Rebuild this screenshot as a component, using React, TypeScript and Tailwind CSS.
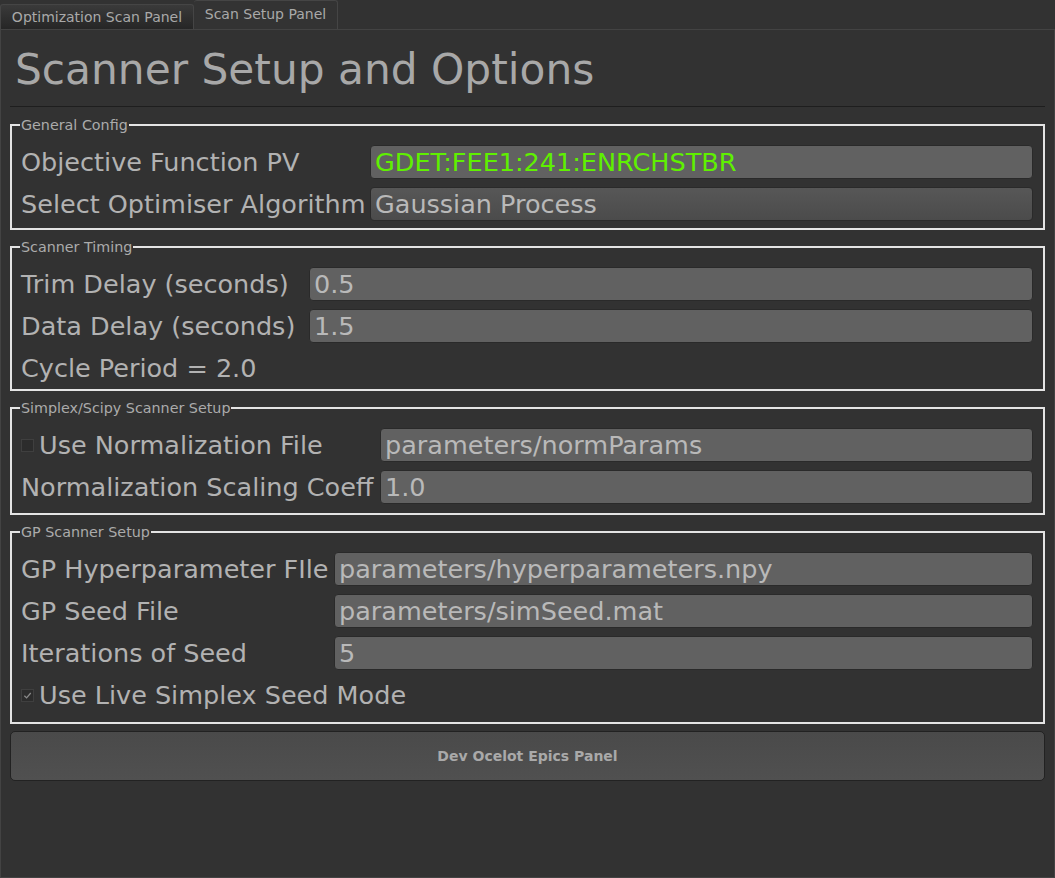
import React from "react";

const font = { fontFamily: '"DejaVu Sans", "Liberation Sans", sans-serif' };

type Row =
  | { kind: "input"; label: string; value: string; green?: boolean; combo?: boolean; check?: boolean; checked?: boolean }
  | { kind: "text"; label: string }
  | { kind: "check"; label: string; checked: boolean };

const CheckBox = ({ checked }: { checked: boolean }) => (
  <span className="mr-[5px] flex h-[13px] w-[13px] shrink-0 items-center justify-center border border-[#3f3f3f] bg-[#2c2c2c]">
    {checked && (
      <svg viewBox="0 0 10 10" className="h-[9px] w-[9px]">
        <path d="M1.5 5.2 L4 7.6 L8.6 2.2" fill="none" stroke="#8a8a8a" strokeWidth="1.4" />
      </svg>
    )}
  </span>
);

const Field = ({ value, green, combo }: { value: string; green?: boolean; combo?: boolean }) => (
  <div
    className={`flex h-[34px] items-center overflow-hidden rounded-[4px] border border-[#2a2a2a] pl-[4px] pt-[1px] text-[25.5px] leading-none ${
      combo ? "bg-gradient-to-b from-[#575757] to-[#4b4b4b]" : "bg-[#616161]"
    } ${green ? "text-[#5ff000]" : "text-[#b9b9b9]"}`}
  >
    {value}
  </div>
);

const Group = ({
  title,
  labelWidth,
  rows,
  className,
}: {
  title: string;
  labelWidth: string;
  rows: Row[];
  className: string;
}) => (
  <div className={`border-2 border-[#e4e4e4] pl-[9px] pr-[10px] ${className}`}>
    <div className="-mt-[9px] -ml-[1px] w-fit bg-[#323232] px-[1px] text-[14.3px] leading-[16px] text-[#ababab]">
      {title}
    </div>
    <div className={`mt-[12px] grid gap-y-[8px] ${labelWidth}`}>
      {rows.map((r, i) => {
        if (r.kind === "input") {
          return (
            <React.Fragment key={i}>
              <div className="flex h-[34px] items-center whitespace-nowrap text-[25.5px] text-[#b2b2b2]">
                {r.check && <CheckBox checked={!!r.checked} />}
                {r.label}
              </div>
              <Field value={r.value} green={r.green} combo={r.combo} />
            </React.Fragment>
          );
        }
        if (r.kind === "text") {
          return (
            <div key={i} className="col-span-2 flex h-[34px] items-center text-[25.5px] text-[#b2b2b2]">
              {r.label}
            </div>
          );
        }
        return (
          <div key={i} className="col-span-2 flex h-[34px] items-center text-[25.5px] text-[#b2b2b2]">
            <CheckBox checked={r.checked} />
            {r.label}
          </div>
        );
      })}
    </div>
  </div>
);

export default function App() {
  return (
    <div className="flex h-[878px] w-[1055px] flex-col bg-[#323232]" style={font}>
      {/* Tabs */}
      <div className="flex h-[29px] items-end">
        <div className="flex h-[25px] w-[194px] items-center justify-center rounded-t-[3px] border border-b-0 border-[#454545] bg-gradient-to-b from-[#3a3a3a] to-[#262626] text-[14px] text-[#a9a9a9]">
          Optimization Scan Panel
        </div>
        <div className="flex h-[29px] w-[144px] items-center justify-center rounded-t-[3px] border border-b-0 border-l-0 border-[#454545] bg-[#333333] pb-[1px] text-[14px] text-[#a9a9a9]">
          Scan Setup Panel
        </div>
      </div>

      {/* Panel */}
      <div className="flex flex-1 flex-col border border-[#434343] px-[9px]">
        <div className="ml-[5px] mt-[15px] text-[42.3px] leading-[50px] text-[#a8a8a8]">Scanner Setup and Options</div>
        <div className="mt-[11px] h-px bg-[#1e1e1e]" />

        <Group
          title="General Config"
          labelWidth="grid-cols-[349px_1fr]"
          className="mt-[17px] pb-[7px]"
          rows={[
            { kind: "input", label: "Objective Function PV", value: "GDET:FEE1:241:ENRCHSTBR", green: true },
            { kind: "input", label: "Select Optimiser Algorithm", value: "Gaussian Process", combo: true },
          ]}
        />

        <Group
          title="Scanner Timing"
          labelWidth="grid-cols-[288px_1fr]"
          className="mt-[16px] pb-[4px]"
          rows={[
            { kind: "input", label: "Trim Delay (seconds)", value: "0.5" },
            { kind: "input", label: "Data Delay (seconds)", value: "1.5" },
            { kind: "text", label: "Cycle Period = 2.0" },
          ]}
        />

        <Group
          title="Simplex/Scipy Scanner Setup"
          labelWidth="grid-cols-[359px_1fr]"
          className="mt-[16px] pb-[9px]"
          rows={[
            { kind: "input", label: "Use Normalization File", value: "parameters/normParams", check: true, checked: false },
            { kind: "input", label: "Normalization Scaling Coeff", value: "1.0" },
          ]}
        />

        <Group
          title="GP Scanner Setup"
          labelWidth="grid-cols-[313px_1fr]"
          className="mt-[16px] pb-[10px]"
          rows={[
            { kind: "input", label: "GP Hyperparameter FIle", value: "parameters/hyperparameters.npy" },
            { kind: "input", label: "GP Seed File", value: "parameters/simSeed.mat" },
            { kind: "input", label: "Iterations of Seed", value: "5" },
            { kind: "check", label: "Use Live Simplex Seed Mode", checked: true },
          ]}
        />

        <button className="mt-[7px] flex h-[50px] items-center justify-center rounded-[5px] border border-[#222222] bg-gradient-to-b from-[#4a4a4a] to-[#505050] text-[14px] font-bold text-[#a9a9a9]">
          Dev Ocelot Epics Panel
        </button>
      </div>
    </div>
  );
}
